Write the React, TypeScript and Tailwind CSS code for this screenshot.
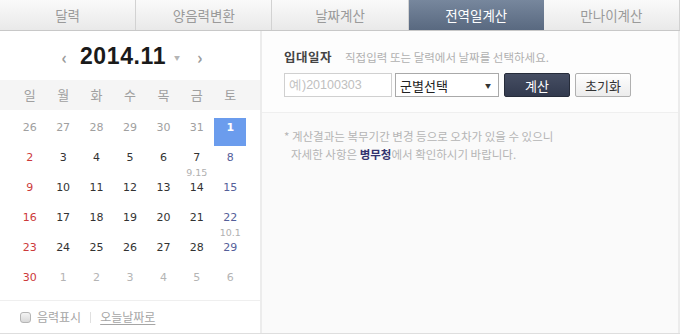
import React from "react";

const KR = "font-['Noto_Sans_CJK_KR',sans-serif]";
const NUM = "font-['DejaVu_Sans',sans-serif]";

type Cell = { d: number; kind: "prev" | "sun" | "sat" | "day" | "next" | "sel"; lunar?: string };

const rows: Cell[][] = [
  [
    { d: 26, kind: "prev" },
    { d: 27, kind: "prev" },
    { d: 28, kind: "prev" },
    { d: 29, kind: "prev" },
    { d: 30, kind: "prev" },
    { d: 31, kind: "prev" },
    { d: 1, kind: "sel" },
  ],
  [
    { d: 2, kind: "sun" },
    { d: 3, kind: "day" },
    { d: 4, kind: "day" },
    { d: 5, kind: "day" },
    { d: 6, kind: "day" },
    { d: 7, kind: "day", lunar: "9.15" },
    { d: 8, kind: "sat" },
  ],
  [
    { d: 9, kind: "sun" },
    { d: 10, kind: "day" },
    { d: 11, kind: "day" },
    { d: 12, kind: "day" },
    { d: 13, kind: "day" },
    { d: 14, kind: "day" },
    { d: 15, kind: "sat" },
  ],
  [
    { d: 16, kind: "sun" },
    { d: 17, kind: "day" },
    { d: 18, kind: "day" },
    { d: 19, kind: "day" },
    { d: 20, kind: "day" },
    { d: 21, kind: "day" },
    { d: 22, kind: "sat", lunar: "10.1" },
  ],
  [
    { d: 23, kind: "sun" },
    { d: 24, kind: "day" },
    { d: 25, kind: "day" },
    { d: 26, kind: "day" },
    { d: 27, kind: "day" },
    { d: 28, kind: "day" },
    { d: 29, kind: "sat" },
  ],
  [
    { d: 30, kind: "sun" },
    { d: 1, kind: "next" },
    { d: 2, kind: "next" },
    { d: 3, kind: "next" },
    { d: 4, kind: "next" },
    { d: 5, kind: "next" },
    { d: 6, kind: "next" },
  ],
];

const tabs = ["달력", "양음력변환", "날짜계산", "전역일계산", "만나이계산"];
const weekdays = ["일", "월", "화", "수", "목", "금", "토"];

const colorFor: Record<Cell["kind"], string> = {
  prev: "text-[#a0a0a0]",
  next: "text-[#b4b4b4]",
  sun: "text-[#cc3a3a]",
  sat: "text-[#55609a]",
  day: "text-[#333]",
  sel: "text-white font-bold",
};

export default function App() {
  return (
    <div className={`w-[680px] h-[334px] bg-white overflow-hidden ${KR}`}>
      {/* tabs */}
      <div className="flex h-[31px] border-b border-[#c8c8c8]">
        {tabs.map((t, i) => (
          <div
            key={t}
            className={`flex-1 flex items-center justify-center text-[13.5px] ${
              i === 3
                ? "bg-gradient-to-b from-[#77879d] to-[#596980] text-white"
                : "bg-gradient-to-b from-[#fafafa] to-[#e9e9e9] text-[#9a9a9a] border-r border-[#d2d2d2]"
            }`}
          >
            {t}
          </div>
        ))}
      </div>

      <div className="flex h-[303px] border-b border-[#dedede]">
        {/* calendar */}
        <div className="w-[262px] border-r-2 border-[#ececec] flex flex-col">
          <div className="h-[49px] flex items-center justify-center pl-[4px]">
            <span className="text-[#9a9a9a] text-[17px] font-bold leading-none mr-[13px] mt-[1px]">‹</span>
            <span className="font-['Liberation_Sans',sans-serif] font-bold text-[23px] tracking-[0.6px] text-[#1a1a1a] leading-none mt-[2px]">
              2014.11
            </span>
            <span className="text-[#b5b5b5] text-[6px] ml-[8px] mt-[4px]">▼</span>
            <span className="text-[#9a9a9a] text-[17px] font-bold leading-none ml-[17px] mt-[1px]">›</span>
          </div>

          <div className="h-[30px] bg-[#f5f5f5] grid grid-cols-7 px-[13px] items-center">
            {weekdays.map((w) => (
              <div key={w} className="text-center text-[13px] text-[#a0a0a0]">
                {w}
              </div>
            ))}
          </div>

          <div className={`pt-[8px] px-[13px] ${NUM}`}>
            {rows.map((r, ri) => (
              <div key={ri} className="grid grid-cols-7 h-[30px]">
                {r.map((c, ci) => (
                  <div key={ci} className="flex justify-center">
                    <div
                      className={`w-[32px] h-[28px] flex flex-col items-center pt-[4px] ${
                        c.kind === "sel" ? "bg-[#6b9ced]" : ""
                      }`}
                    >
                      <span className={`text-[11px] leading-[12px] ${colorFor[c.kind]}`}>{c.d}</span>
                      {c.lunar && (
                        <span className="text-[9.5px] leading-[11px] mt-[3px] text-[#b0b0b0]">
                          {c.lunar}
                        </span>
                      )}
                    </div>
                  </div>
                ))}
              </div>
            ))}
          </div>

          <div className="mt-[2px] border-t border-[#efefef] flex-1 flex items-center pl-[20px] text-[12px] text-[#a5a5a5]">
            <span className="w-[11px] h-[11px] rounded-[3px] border border-[#b5b5b5] bg-gradient-to-b from-[#f4f4f4] to-[#d9d9d9] mr-[6px]" />
            <span>음력표시</span>
            <span className="mx-[9px] w-px h-[11px] bg-[#e0e0e0]" />
            <span className="underline underline-offset-2">오늘날짜로</span>
          </div>
        </div>

        {/* form */}
        <div className="flex-1 bg-[#fafafa] border-r-2 border-[#ececec] flex flex-col">
          <div className="h-[82px] bg-[#fdfdfd] border-b border-[#efefef] pl-[22px] pt-[17px]">
            <div className="flex items-baseline">
              <span className="text-[12.5px] font-bold text-[#444] tracking-[0.5px]">입대일자</span>
              <span className="ml-[13px] text-[11.5px] text-[#b0b0b0]">
                직접입력 또는 달력에서 날짜를 선택하세요.
              </span>
            </div>
            <div className="flex items-center mt-[6px] h-[25px]">
              <div className="w-[108px] h-[24px] border border-[#d0d0d0] bg-white flex items-center pl-[4px] text-[12.5px] text-[#c0c0c0] font-['Liberation_Sans',sans-serif]">
                예)20100303
              </div>
              <div className="ml-[3px] w-[104px] h-[24px] border border-[#a9a9a9] bg-white flex items-center justify-between pl-[4px] pr-[7px]">
                <span className="text-[13px] text-[#222]">군별선택</span>
                <span className="text-[6px] text-[#333]">▼</span>
              </div>
              <div className="ml-[5px] w-[66px] h-[24px] rounded-[2px] bg-gradient-to-b from-[#464e63] to-[#323a4e] border border-[#262c3a] flex items-center justify-center text-white text-[13px]">
                계산
              </div>
              <div className="ml-[5px] w-[56px] h-[24px] rounded-[2px] bg-gradient-to-b from-white to-[#ececec] border border-[#b0b0b0] flex items-center justify-center text-[#333] text-[13px]">
                초기화
              </div>
            </div>
          </div>
          <div className="pl-[22px] pt-[14px] text-[11.5px] leading-[18px] text-[#b5b5b5]">
            <p>* 계산결과는 복무기간 변경 등으로 오차가 있을 수 있으니</p>
            <p className="pl-[7px]">
              자세한 사항은 <span className="font-bold text-[#33336e]">병무청</span>에서 확인하시기 바랍니다.
            </p>
          </div>
        </div>
      </div>
    </div>
  );
}
